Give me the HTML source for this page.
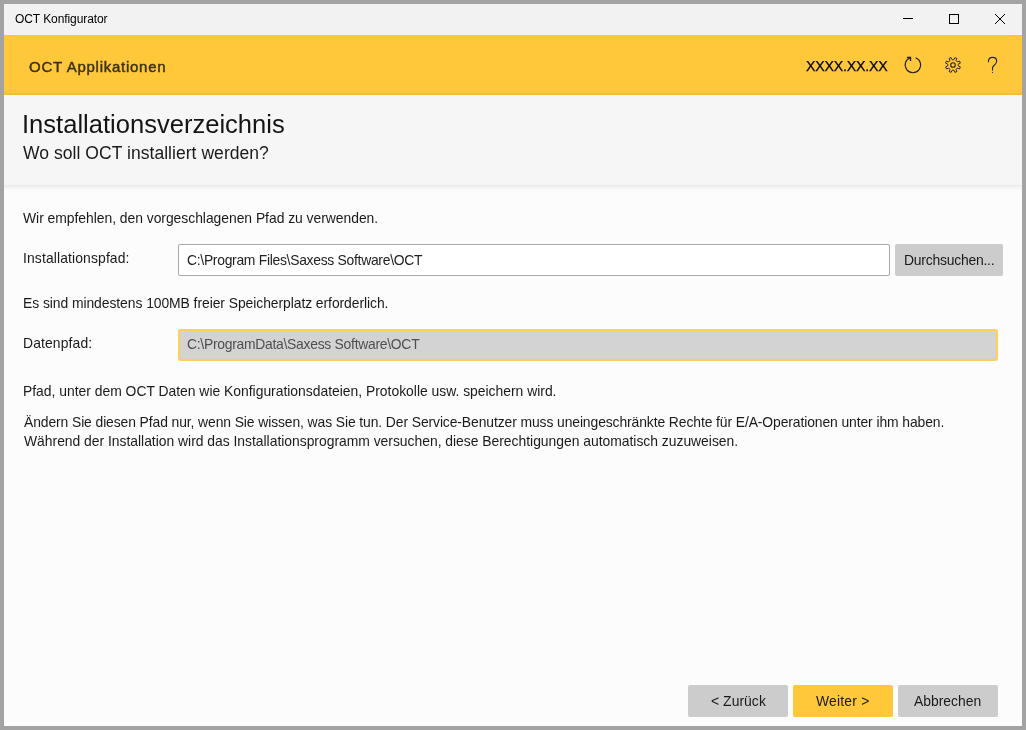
<!DOCTYPE html>
<html><head><meta charset="utf-8"><style>
*{margin:0;padding:0;box-sizing:border-box}
html,body{width:1026px;height:730px;overflow:hidden;background:#a3a3a3}
body{position:relative;font-family:"Liberation Sans",sans-serif}
.b{position:absolute}
.t{position:absolute;white-space:nowrap;line-height:1;will-change:transform}
</style></head>
<body>
<div class="b" style="left:4px;top:4px;width:1018px;height:722px;background:#fcfcfc"></div>
<div class="b" style="left:4px;top:4px;width:1018px;height:31px;background:#f2f2f2"></div>
<div class="b" style="left:4px;top:35px;width:1018px;height:60px;background:linear-gradient(to bottom,#ffc73a 0,#ffc73a 56px,#fac236 58px,#f2ba30 60px)"></div>
<div class="b" style="left:4px;top:95px;width:1018px;height:90px;background:#f6f6f6"></div>
<div class="b" style="left:4px;top:185px;width:1018px;height:6px;background:linear-gradient(to bottom,#eaeaea 0,#f1f1f1 2px,#f8f8f8 4px,#fcfcfc 6px)"></div>
<div class="b" style="left:178px;top:244px;width:712px;height:32px;background:#fff;border:1px solid #a8a8a8;border-radius:2px"></div>
<div class="b" style="left:895px;top:244px;width:108px;height:32px;background:#cccccc;border-radius:2px"></div>
<div class="b" style="left:178px;top:329px;width:820px;height:32px;background:#d3d3d3;border:2px solid #ffd058;border-radius:3px"></div>
<div class="b" style="left:688px;top:685px;width:100px;height:32px;background:#cccccc;border-radius:2px"></div>
<div class="b" style="left:793px;top:685px;width:100px;height:32px;background:#ffc73a;border-radius:2px"></div>
<div class="b" style="left:898px;top:685px;width:100px;height:32px;background:#cccccc;border-radius:2px"></div>
<div class="t" style="left:14.5px;top:13px;font-size:12px;font-weight:400;color:#000;letter-spacing:-0.08px;">OCT Konfigurator</div>
<div class="t" style="left:28.7px;top:59px;font-size:15.0px;font-weight:400;color:#3b3213;letter-spacing:0.738px;-webkit-text-stroke:0.45px #3b3213;">OCT Applikationen</div>
<div class="t" style="left:805.7px;top:59px;font-size:14.2px;font-weight:400;color:#000;letter-spacing:-0.2px;-webkit-text-stroke:0.25px #000;">XXXX.XX.XX</div>
<div class="t" style="left:22.1px;top:112px;font-size:25.55px;font-weight:400;color:#141414;letter-spacing:0.0px;">Installationsverzeichnis</div>
<div class="t" style="left:23.1px;top:145px;font-size:17.55px;font-weight:400;color:#1a1a1a;letter-spacing:0.033px;">Wo soll OCT installiert werden?</div>
<div class="t" style="left:23.3px;top:212px;font-size:13.9px;font-weight:400;color:#1a1a1a;letter-spacing:-0.031px;">Wir empfehlen, den vorgeschlagenen Pfad zu verwenden.</div>
<div class="t" style="left:22.7px;top:252px;font-size:13.9px;font-weight:400;color:#1a1a1a;letter-spacing:0.129px;">Installationspfad:</div>
<div class="t" style="left:186.5px;top:254px;font-size:13.9px;font-weight:400;color:#222;letter-spacing:-0.286px;">C:\Program Files\Saxess Software\OCT</div>
<div class="t" style="left:903.6px;top:254px;font-size:13.9px;font-weight:400;color:#1a1a1a;letter-spacing:-0.215px;">Durchsuchen...</div>
<div class="t" style="left:22.7px;top:297px;font-size:13.9px;font-weight:400;color:#1a1a1a;letter-spacing:-0.062px;">Es sind mindestens 100MB freier Speicherplatz erforderlich.</div>
<div class="t" style="left:23px;top:337px;font-size:13.9px;font-weight:400;color:#1a1a1a;letter-spacing:0.133px;">Datenpfad:</div>
<div class="t" style="left:187px;top:338px;font-size:13.9px;font-weight:400;color:#4f4f4f;letter-spacing:-0.273px;">C:\ProgramData\Saxess Software\OCT</div>
<div class="t" style="left:22.5px;top:385px;font-size:13.9px;font-weight:400;color:#1a1a1a;letter-spacing:-0.007px;">Pfad, unter dem OCT Daten wie Konfigurationsdateien, Protokolle usw. speichern wird.</div>
<div class="t" style="left:23.5px;top:416px;font-size:13.9px;font-weight:400;color:#1a1a1a;letter-spacing:-0.098px;">Ändern Sie diesen Pfad nur, wenn Sie wissen, was Sie tun. Der Service-Benutzer muss uneingeschränkte Rechte für E/A-Operationen unter ihm haben.</div>
<div class="t" style="left:23.5px;top:435px;font-size:13.9px;font-weight:400;color:#1a1a1a;letter-spacing:-0.015px;">Während der Installation wird das Installationsprogramm versuchen, diese Berechtigungen automatisch zuzuweisen.</div>
<div class="t" style="left:710.5px;top:695px;font-size:13.9px;font-weight:400;color:#1a1a1a;letter-spacing:0.057px;">&lt; Zurück</div>
<div class="t" style="left:816px;top:695px;font-size:13.9px;font-weight:400;color:#1a1a1a;letter-spacing:0.2px;">Weiter &gt;</div>
<div class="t" style="left:914.2px;top:695px;font-size:13.9px;font-weight:400;color:#1a1a1a;letter-spacing:0.0px;">Abbrechen</div>
<svg class="b" style="left:0;top:0" width="1026" height="730" viewBox="0 0 1026 730">
<g fill="none" stroke="#000" stroke-width="1">
<line x1="903" y1="18.5" x2="913" y2="18.5"/>
<rect x="949.5" y="14.5" width="9" height="9"/>
<line x1="995" y1="14" x2="1005" y2="24"/><line x1="1005" y1="14" x2="995" y2="24"/>
</g>
<g fill="none" stroke="#222" stroke-width="1.1">
<path d="M915.6 57.7 A7.75 7.75 0 1 1 910.2 57.7"/>
<path d="M906.9 57.5 L910.5 57.5 L910.5 61" stroke-width="1.35" stroke-linejoin="miter"/>
<circle cx="953" cy="65" r="2.3"/>
<path d="M952.17 59.77 L953.83 59.77 L954.90 57.64 L956.86 58.45 L956.12 60.71 L957.29 61.88 L959.55 61.14 L960.36 63.10 L958.23 64.17 L958.23 65.83 L960.36 66.90 L959.55 68.86 L957.29 68.12 L956.12 69.29 L956.86 71.55 L954.90 72.36 L953.83 70.23 L952.17 70.23 L951.10 72.36 L949.14 71.55 L949.88 69.29 L948.71 68.12 L946.45 68.86 L945.64 66.90 L947.77 65.83 L947.77 64.17 L945.64 63.10 L946.45 61.14 L948.71 61.88 L949.88 60.71 L949.14 58.45 L951.10 57.64Z" stroke-linejoin="round" stroke-width="0.95"/>
<path d="M988.4 62.2 C988.4 59.3 990.2 57.4 992.5 57.4 C995 57.4 996.7 59.2 996.7 61.3 C996.7 63.4 995.3 64.4 994 65.5 C993 66.4 992.5 67 992.5 68.2 L992.5 70.4"/>
<circle cx="992.5" cy="72.3" r="0.6" fill="#222" stroke="none"/>
</g>
</svg>
</body></html>
